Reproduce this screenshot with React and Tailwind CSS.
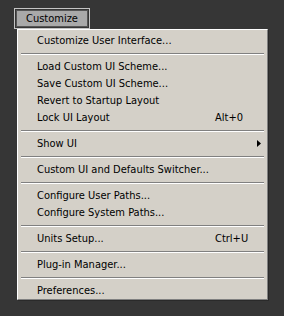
import React from "react";

const Item = ({ label, shortcut, arrow }) => (
  <div className="relative flex h-[17px] items-center pl-[19px] text-[11px] leading-none text-black">
    <span>{label}</span>
    {shortcut && <span className="absolute left-[197px]">{shortcut}</span>}
    {arrow && (
      <svg className="absolute left-[239px]" width="4" height="7" viewBox="0 0 4 7">
        <path d="M0 0 L4 3.5 L0 7 Z" fill="#000" />
      </svg>
    )}
  </div>
);

const Sep = () => (
  <div className="flex h-[9px] flex-col justify-center px-[3px]">
    <div className="h-px bg-[#808080]" />
    <div className="h-px bg-white" />
  </div>
);

export default function App() {
  return (
    <div
      className="flex h-[316px] w-[284px] flex-col items-start overflow-hidden bg-[#363636] pl-[14px] pt-[8px]"
      style={{ fontFamily: "'DejaVu Sans Condensed', 'DejaVu Sans', sans-serif", fontStretch: "condensed" }}
    >
      <div className="flex border border-[#c4c4c4] p-px">
        <div className="border border-[#555] bg-[#a9a9a9] px-[9px] text-[11px] leading-[15px] text-black">
          Customize
        </div>
      </div>
      <div className="ml-[3px] w-[251px] border-l border-t border-white border-r-[#808080] border-b-[#808080] border-r border-b bg-[#d4d0c8] pt-[2px] shadow-[1px_1px_0_#2a2a2a]">
        <Item label="Customize User Interface..." />
        <Sep />
        <Item label="Load Custom UI Scheme..." />
        <Item label="Save Custom UI Scheme..." />
        <Item label="Revert to Startup Layout" />
        <Item label="Lock UI Layout" shortcut="Alt+0" />
        <Sep />
        <Item label="Show UI" arrow />
        <Sep />
        <Item label="Custom UI and Defaults Switcher..." />
        <Sep />
        <Item label="Configure User Paths..." />
        <Item label="Configure System Paths..." />
        <Sep />
        <Item label="Units Setup..." shortcut="Ctrl+U" />
        <Sep />
        <Item label="Plug-in Manager..." />
        <Sep />
        <Item label="Preferences..." />
      </div>
    </div>
  );
}
